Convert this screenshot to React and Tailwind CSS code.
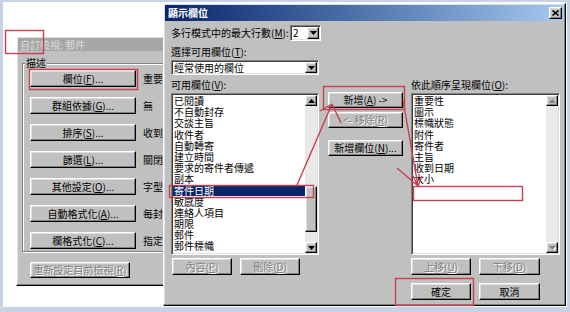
import React from 'react';

// win2000 style bevels
const raised =
  'border border-t-white border-l-white border-r-black border-b-black shadow-[inset_-1px_-1px_0_#808080,inset_1px_1px_0_#dfdfdf]';
const sunken =
  'border border-t-[#808080] border-l-[#808080] border-r-white border-b-white shadow-[inset_1px_1px_0_#404040,inset_-1px_-1px_0_#dfdfdf]';
const dim = 'text-[#808080] [text-shadow:1px_1px_0_#fff]';

function U({ children }) {
  return <span className="underline underline-offset-1">{children}</span>;
}

function Btn({ children, disabled, className = '' }) {
  return (
    <div
      className={`flex items-center justify-center bg-[#c0c0c0] text-[10px] leading-none whitespace-nowrap ${raised} ${
        disabled ? dim : 'text-black'
      } ${className}`}
    >
      {children}
    </div>
  );
}

function Arrow({ up, disabled }) {
  return (
    <div className={`flex h-[11px] w-full items-center justify-center bg-[#c0c0c0] ${raised}`}>
      <svg width="7" height="4" viewBox="0 0 7 4">
        {disabled && <path d={up ? 'M1 4h7L4.5 1z' : 'M1 1h7L4.5 5z'} fill="#fff" />}
        <path d={up ? 'M0 4h7L3.5 0z' : 'M0 0h7L3.5 4z'} fill={disabled ? '#808080' : '#000'} />
      </svg>
    </div>
  );
}

function Combo({ value, className = '' }) {
  return (
    <div className={`flex items-stretch bg-white ${sunken}`+ ' ' + className}>
      <span className="flex-1 pl-[2px] text-[10px] leading-[13px] text-black">{value}</span>
      <div className={`m-[1px] flex w-[12px] items-center justify-center bg-[#c0c0c0] ${raised}`}>
        <svg width="7" height="4" viewBox="0 0 7 4">
          <path d="M0 0h7L3.5 4z" fill="#000" />
        </svg>
      </div>
    </div>
  );
}

function ListBox({ items, selected, thumb, disabled }) {
  return (
    <div className={`flex h-[162px] bg-white ${sunken}`}>
      <div className="flex-1 overflow-hidden pl-[1px] pt-[1px]">
        {items.map((it) => (
          <div
            key={it}
            className={`h-[11.2px] pl-[1px] text-[10px] leading-[11.2px] whitespace-nowrap ${
              it === selected ? 'bg-[#0a246a] text-white' : 'text-black'
            }`}
          >
            {it}
          </div>
        ))}
      </div>
      <div className="my-[1px] mr-[1px] flex w-[12px] flex-col bg-[#e9e9e9]">
        <Arrow up disabled={disabled} />
        <div className="flex-1">
          {thumb && <div className={`mt-[80px] h-[46px] bg-[#c0c0c0] ${raised}`} />}
        </div>
        <Arrow disabled={disabled} />
      </div>
    </div>
  );
}

const available = [
  '已閱讀',
  '不自動封存',
  '交談主旨',
  '收件者',
  '自動轉寄',
  '建立時間',
  '要求的寄件者傳遞',
  '副本',
  '寄件日期',
  '敏感度',
  '連絡人項目',
  '期限',
  '郵件',
  '郵件標幟',
];

const shown = ['重要性', '圖示', '標幟狀態', '附件', '寄件者', '主旨', '收到日期', '大小'];

const leftRows = [
  [<>欄位(<U>F</U>)...</>, '重要'],
  [<>群組依據(<U>G</U>)...</>, '無'],
  [<>排序(<U>S</U>)...</>, '收到'],
  [<>篩選(<U>L</U>)...</>, '關閉'],
  [<>其他設定(<U>O</U>)...</>, '字型'],
  [<>自動格式化(<U>A</U>)...</>, '每封'],
  [<>欄格式化(<U>C</U>)...</>, '指定'],
];

export default function App() {
  return (
    <div className="relative h-[312px] w-[570px] overflow-hidden bg-[#c7d2e4] pb-[5px] pl-[3px] pr-[3px] pt-[2px] font-['Noto_Sans_CJK_TC','Noto_Sans_CJK_SC',sans-serif]">
      <div className="relative h-full bg-white">
        {/* back window: 自訂檢視 */}
        <div className={`absolute left-[13px] top-[34px] flex h-[250px] w-[200px] flex-col bg-[#c0c0c0] p-[1px] ${raised}`}>
          <div className="flex h-[13px] items-center bg-[#a6a6a6] pl-[2px] text-[10px] leading-none text-[#dcdcdc]">
            自訂檢視: 郵件
          </div>
          <div className="pl-[4px] pt-[12px]">
            <div className="relative border border-[#808080] pb-[2px] pl-[7px] pt-[6px] shadow-[1px_1px_0_#fff,inset_1px_1px_0_#fff]">
              <span className="absolute left-[2px] top-[-7px] bg-[#c0c0c0] px-[1px] text-[10px] leading-[12px] text-black">
                描述
              </span>
              <div className="flex flex-col gap-[10px]">
                {leftRows.map(([label, value], i) => (
                  <div key={i} className="flex items-center gap-[7px]">
                    <Btn className="h-[17px] w-[106px]">{label}</Btn>
                    <span className="text-[10px] leading-none whitespace-nowrap text-black">{value}</span>
                  </div>
                ))}
              </div>
            </div>
            <Btn disabled className="ml-[8px] mt-[10px] h-[16px] w-[100px]">
              重新設定目前檢視(<U>R</U>)
            </Btn>
          </div>
        </div>

        {/* front window: 顯示欄位 */}
        <div className={`absolute left-[160px] top-[1px] flex h-[303px] w-[403px] flex-col bg-[#c0c0c0] p-[1px] ${raised}`}>
          <div className="flex h-[16px] items-center justify-between bg-gradient-to-r from-[#0a246a] to-[#a6caf0] pl-[3px] pr-[2px]">
            <span className="text-[10px] font-bold leading-none text-white">顯示欄位</span>
            <div className={`flex h-[12px] w-[13px] items-center justify-center bg-[#c0c0c0] ${raised}`}>
              <svg width="7" height="6" viewBox="0 0 7 6">
                <path d="M0.5 0.5l6 5M6.5 0.5l-6 5" stroke="#000" strokeWidth="1.6" />
              </svg>
            </div>
          </div>

          <div className="flex flex-col pl-[6px] pt-[4px] text-[10px] leading-none text-black">
            <div className="flex h-[16px] items-center">
              <span className="w-[119px] whitespace-nowrap">
                多行模式中的最大行數(<U>M</U>):
              </span>
              <Combo value="2" className="h-[16px] w-[31px]" />
            </div>
            <div className="mt-[5px] flex h-[12px] items-center">
              選擇可用欄位(<U>T</U>):
            </div>
            <Combo value="經常使用的欄位" className="mt-[2px] h-[15px] w-[148px]" />

            <div className="mt-[4px] flex">
              <div className="flex w-[148px] flex-col">
                <div className="flex h-[12px] items-center">
                  可用欄位(<U>V</U>):
                </div>
                <div className="mt-[2px]">
                  <ListBox items={available} selected="寄件日期" thumb />
                </div>
                <div className="mt-[3px] flex gap-[8px] pl-[1px]">
                  <Btn disabled className="h-[17px] w-[60px]">
                    內容(<U>P</U>)
                  </Btn>
                  <Btn disabled className="h-[17px] w-[60px]">
                    刪除(<U>D</U>)
                  </Btn>
                </div>
              </div>

              <div className="ml-[9px] flex w-[75px] flex-col pt-[13px]">
                <Btn className="h-[16px]">
                  新增(<U>A</U>) -&gt;
                </Btn>
                <Btn disabled className="mt-[4px] h-[16px]">
                  &lt;- 移除(<U>R</U>)
                </Btn>
                <Btn className="mt-[12px] h-[16px]">
                  新增欄位(<U>N</U>)...
                </Btn>
              </div>

              <div className="ml-[8px] flex w-[149px] flex-col">
                <div className="flex h-[12px] items-center whitespace-nowrap">
                  依此順序呈現欄位(<U>O</U>):
                </div>
                <div className="mt-[2px]">
                  <ListBox items={shown} disabled />
                </div>
                <div className="mt-[3px] flex gap-[8px]">
                  <Btn disabled className="h-[17px] w-[60px]">
                    上移(<U>U</U>)
                  </Btn>
                  <Btn disabled className="h-[17px] w-[61px]">
                    下移(<U>D</U>)
                  </Btn>
                </div>
                <div className="mt-[8px] flex gap-[8px]">
                  <Btn className="h-[17px] w-[60px]">確定</Btn>
                  <Btn className="h-[17px] w-[61px]">取消</Btn>
                </div>
              </div>
            </div>
          </div>
        </div>
      </div>

      {/* red annotation marks drawn over the screenshot */}
      <svg
        className="pointer-events-none absolute left-0 top-0"
        width="570"
        height="312"
        viewBox="0 0 570 312"
        fill="none"
        stroke="#c8404e"
        strokeWidth="1.4"
      >
        <rect x="5.5" y="30.5" width="38" height="23" />
        <rect x="29.5" y="69.5" width="108" height="20" />
        <rect x="323.5" y="86.5" width="81" height="23" />
        <rect x="169.5" y="185.5" width="144" height="12" />
        <rect x="413.5" y="186.5" width="109" height="14" />
        <rect x="395.5" y="278.5" width="78" height="27" />
        <path d="M297 185L332 104" />
        <path d="M332 104L320 111M332 104L341 123" />
        <path d="M403 100L418 186" />
        <path d="M397 168L418 186M418 186L412 174M418 186L422 176" />
      </svg>
    </div>
  );
}
